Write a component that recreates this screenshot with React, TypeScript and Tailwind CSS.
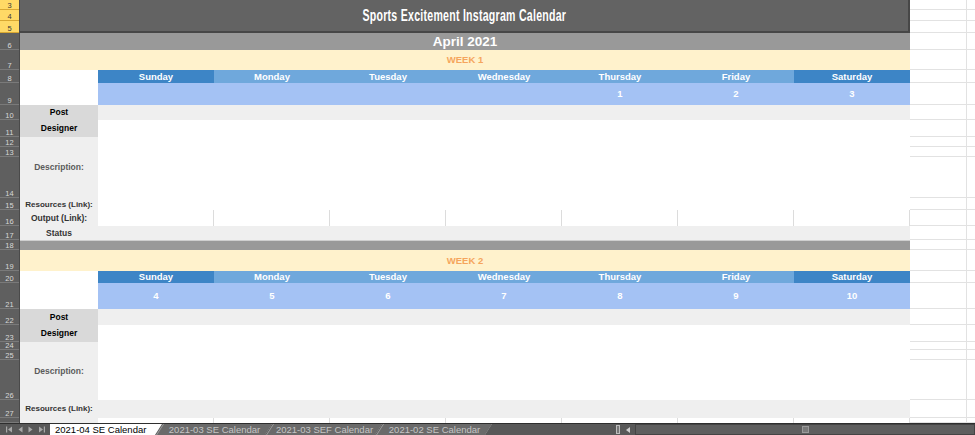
import React from "react";

const days = ["Sunday", "Monday", "Tuesday", "Wednesday", "Thursday", "Friday", "Saturday"];

// row numbers on the left + heights (shared by the right-hand grid filler)
const rows: { n: number; h: string }[] = [
  { n: 3, h: "h-[10px]" },
  { n: 4, h: "h-[11px]" },
  { n: 5, h: "h-[12px]" },
  { n: 6, h: "h-[17px]" },
  { n: 7, h: "h-[20px]" },
  { n: 8, h: "h-[13px]" },
  { n: 9, h: "h-[22px]" },
  { n: 10, h: "h-[15px]" },
  { n: 11, h: "h-[17px]" },
  { n: 12, h: "h-[10px]" },
  { n: 13, h: "h-[10px]" },
  { n: 14, h: "h-[41px]" },
  { n: 15, h: "h-[12px]" },
  { n: 16, h: "h-[16px]" },
  { n: 17, h: "h-[14px]" },
  { n: 18, h: "h-[10px]" },
  { n: 19, h: "h-[21px]" },
  { n: 20, h: "h-[12px]" },
  { n: 21, h: "h-[26px]" },
  { n: 22, h: "h-[16px]" },
  { n: 23, h: "h-[17px]" },
  { n: 24, h: "h-[8px]" },
  { n: 25, h: "h-[10px]" },
  { n: 26, h: "h-[40px]" },
  { n: 27, h: "h-[18px]" },
  { n: 28, h: "h-[5px]" },
];

const font = "font-['Liberation_Sans',Arial,sans-serif]";

function Cells({ cls }: { cls: string }) {
  return (
    <>
      {days.map((d) => (
        <div key={d} className={`w-[116px] h-full ${cls}`} />
      ))}
    </>
  );
}

function Label({ text, cls }: { text: string; cls: string }) {
  return (
    <div className={`w-[78px] h-full flex items-center justify-center font-bold ${cls}`}>{text}</div>
  );
}

function DayHeader({ h }: { h: string }) {
  return (
    <div className={`flex ${h}`}>
      <div className="w-[78px] bg-white" />
      {days.map((d, i) => (
        <div
          key={d}
          className={`w-[116px] flex items-center justify-center text-white font-bold text-[9.5px] leading-none ${
            i === 0 || i === 6 ? "bg-[#3d85c6]" : "bg-[#6fa8dc]"
          }`}
        >
          {d}
        </div>
      ))}
    </div>
  );
}

function DateRow({ h, dates }: { h: string; dates: string[] }) {
  return (
    <div className={`flex ${h}`}>
      <div className="w-[78px] bg-white" />
      {dates.map((d, i) => (
        <div
          key={i}
          className="w-[116px] bg-[#a4c2f4] flex items-center justify-center text-white font-bold text-[9.5px] leading-none"
        >
          {d}
        </div>
      ))}
    </div>
  );
}

function WeekBar({ h, label }: { h: string; label: string }) {
  return (
    <div className={`${h} bg-[#fff2cc] flex items-center justify-center text-[#f5a55c] font-bold text-[9.5px] leading-none`}>
      {label}
    </div>
  );
}

export default function App() {
  return (
    <div className={`w-[975px] h-[435px] overflow-hidden bg-white flex flex-col ${font}`}>
      <div className="flex h-[423px]">
        {/* row headers */}
        <div className="w-[20px] flex flex-col border-r border-[#4a4a4a]">
          {rows.map((r) => (
            <div
              key={r.n}
              className={`${r.h} shrink-0 flex items-end justify-center overflow-hidden text-[7.5px] leading-[7px] border-b ${
                r.n <= 5
                  ? "bg-[#ffd966] text-[#3a3a3a] border-[#d9a832]"
                  : "bg-[#5f5f5f] text-[#d8d8d8] border-[#7a7a7a]"
              }`}
            >
              {r.n < 28 ? r.n : ""}
            </div>
          ))}
        </div>

        {/* sheet content */}
        <div className="w-[890px] flex flex-col text-[8.5px] leading-none">
          <div className="h-[33px] shrink-0 bg-[#636363] border-r-2 border-b-2 border-[#474747] flex items-center justify-center">
            <span className="inline-block text-white font-bold text-[16px] scale-x-[0.66] whitespace-nowrap tracking-[0.4px]">
              Sports Excitement Instagram Calendar
            </span>
          </div>
          <div className="h-[17px] shrink-0 bg-[#999999] flex items-center justify-center text-white font-bold text-[13.5px]">
            April 2021
          </div>

          {/* week 1 */}
          <WeekBar h="h-[20px]" label="WEEK 1" />
          <DayHeader h="h-[13px]" />
          <DateRow h="h-[22px]" dates={["", "", "", "", "1", "2", "3"]} />
          <div className="flex h-[15px]">
            <Label text="Post" cls="bg-[#d9d9d9] text-black" />
            <Cells cls="bg-[#efefef]" />
          </div>
          <div className="flex h-[17px]">
            <Label text="Designer" cls="bg-[#d9d9d9] text-black" />
            <Cells cls="bg-white" />
          </div>
          <div className="flex h-[61px]">
            <Label text="Description:" cls="bg-[#efefef] text-[#5b5b5b]" />
            <Cells cls="bg-white" />
          </div>
          <div className="flex h-[12px]">
            <Label text="Resources (Link):" cls="bg-[#efefef] text-[#333] text-[8px] items-end pb-[1px]" />
            <Cells cls="bg-white" />
          </div>
          <div className="flex h-[16px]">
            <Label text="Output (Link):" cls="bg-[#efefef] text-[#333]" />
            <Cells cls="bg-white border-r border-[#dcdcdc]" />
          </div>
          <div className="flex h-[14px] bg-[#efefef]">
            <Label text="Status" cls="text-[#333]" />
          </div>
          <div className="h-[10px] bg-[#999999] border-t border-[#cfcfcf]" />

          {/* week 2 */}
          <WeekBar h="h-[21px]" label="WEEK 2" />
          <DayHeader h="h-[12px]" />
          <DateRow h="h-[26px]" dates={["4", "5", "6", "7", "8", "9", "10"]} />
          <div className="flex h-[16px]">
            <Label text="Post" cls="bg-[#d9d9d9] text-black" />
            <Cells cls="bg-[#efefef]" />
          </div>
          <div className="flex h-[17px]">
            <Label text="Designer" cls="bg-[#d9d9d9] text-black" />
            <Cells cls="bg-white" />
          </div>
          <div className="flex h-[58px]">
            <Label text="Description:" cls="bg-[#efefef] text-[#5b5b5b]" />
            <Cells cls="bg-white" />
          </div>
          <div className="flex h-[18px] bg-[#efefef]">
            <Label text="Resources (Link):" cls="text-[#333] text-[8px]" />
          </div>
          <div className="flex h-[5px]">
            <div className="w-[78px] bg-[#efefef]" />
            <Cells cls="bg-white border-r border-[#dcdcdc]" />
          </div>
        </div>

        {/* empty columns to the right */}
        <div className="flex-1 flex flex-col">
          {rows.map((r) => (
            <div key={r.n} className={`${r.h} shrink-0 flex border-b border-[#e2e2e2]`}>
              <div className="w-[57px] border-r border-[#e2e2e2]" />
            </div>
          ))}
        </div>
      </div>

      {/* sheet tab bar */}
      <div className="h-[12px] flex bg-[#585858] border-t border-[#2e2e2e] text-[9.5px] leading-none">
        <div className="w-[50px] flex items-center justify-around px-[3px] text-[#a8a8a8]">
          <svg width="7" height="7" viewBox="0 0 7 7" fill="currentColor">
            <rect x="0" y="0.5" width="1.2" height="6" />
            <path d="M6 0.5 L2 3.5 L6 6.5Z" />
          </svg>
          <svg width="5" height="7" viewBox="0 0 5 7" fill="currentColor">
            <path d="M4.5 0.5 L0.5 3.5 L4.5 6.5Z" />
          </svg>
          <svg width="5" height="7" viewBox="0 0 5 7" fill="currentColor">
            <path d="M0.5 0.5 L4.5 3.5 L0.5 6.5Z" />
          </svg>
          <svg width="7" height="7" viewBox="0 0 7 7" fill="currentColor">
            <path d="M1 0.5 L5 3.5 L1 6.5Z" />
            <rect x="5.8" y="0.5" width="1.2" height="6" />
          </svg>
        </div>
        <div className="flex h-full">
          <div className="relative z-10 w-[112px] h-full bg-white text-black flex items-center pl-[5px] [clip-path:polygon(0_0,100%_0,calc(100%-7px)_100%,0_100%)]">
            2021-04 SE Calendar
          </div>
          {["2021-03 SE Calendar", "2021-03 SEF Calendar", "2021-02 SE Calendar"].map((t) => (
            <div
              key={t}
              className="ml-[-6px] w-[116px] h-full bg-[#a0a0a0] [clip-path:polygon(7px_0,100%_0,calc(100%-7px)_100%,0_100%)] flex"
            >
              <div className="ml-[1px] flex-1 bg-[#6a6a6a] text-[#c4c4c4] flex items-center justify-center [clip-path:polygon(7px_0,100%_0,calc(100%-7px)_100%,0_100%)]">
                {t}
              </div>
            </div>
          ))}
        </div>
        <div className="flex-1" />
        <div className="flex items-center gap-[3px] pr-[2px]">
          <div className="w-[4px] h-[9px] border border-[#bdbdbd] bg-[#777]" />
          <div className="w-[10px] h-full flex items-center justify-center">
            <svg width="4" height="6" viewBox="0 0 4 6" fill="#cfcfcf">
              <path d="M4 0 L0 3 L4 6Z" />
            </svg>
          </div>
        </div>
        <div className="w-[340px] h-full bg-[#5e5e5e] border border-[#444] flex items-center justify-center">
          <div className="w-[7px] h-[7px] bg-[#7a7a7a] border border-[#9a9a9a]" />
        </div>
      </div>
    </div>
  );
}
